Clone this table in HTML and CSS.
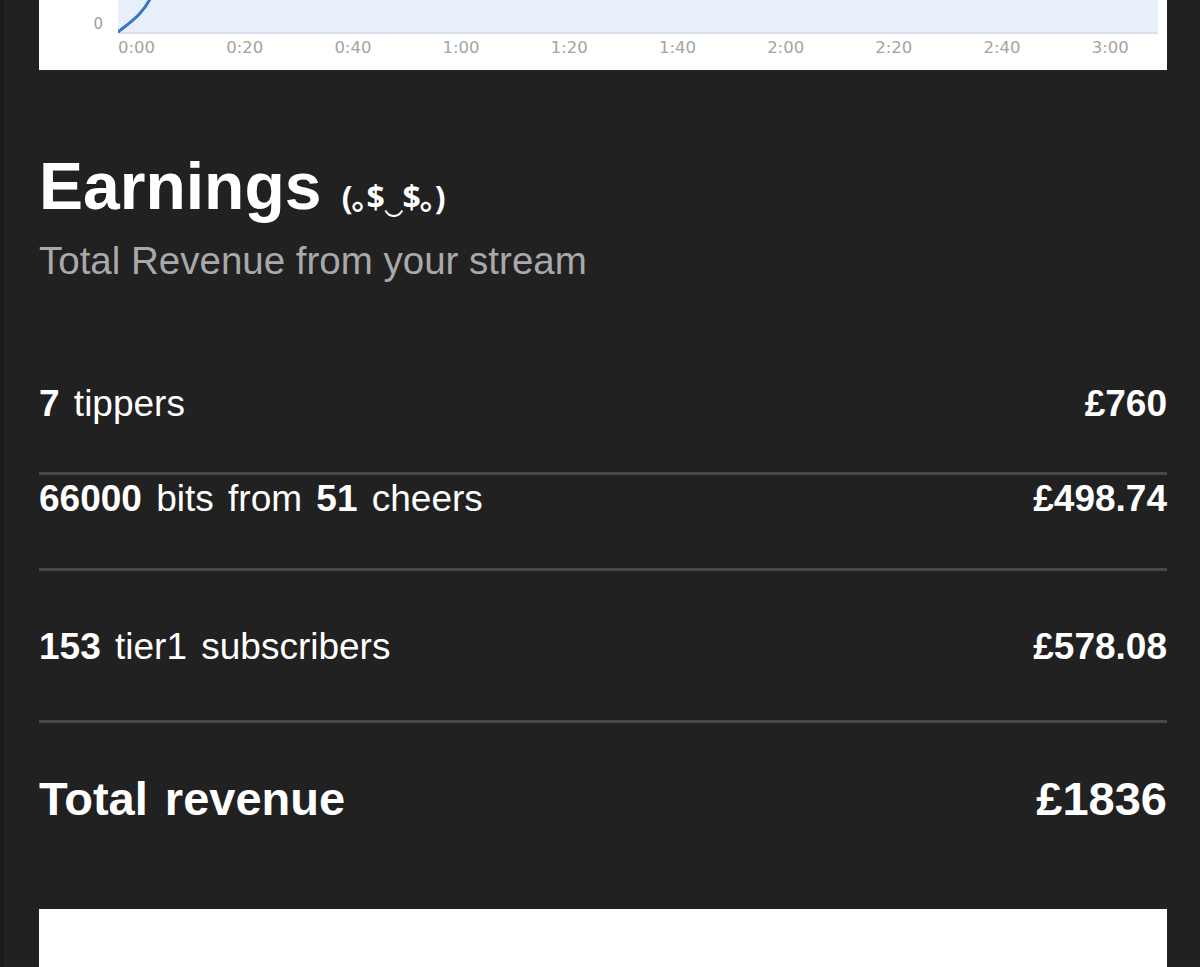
FILE: index.html
```html
<!DOCTYPE html>
<html lang="en">

<head>
    <meta charset="UTF-8">
    <meta name="viewport" content="width=device-width, initial-scale=1.0">
    <title>Stream Summary - Earnings</title>
    <link rel="stylesheet" href="styles.css">
</head>

<body>
    <div class="page">
        <div class="content">
            <!-- viewers chart (top part scrolled out of view) -->
            <div class="chart-card">
                <div class="chart-row">
                    <div class="y-label">0</div>
                    <div class="plot">
                        <svg class="plot-line" width="60" height="60" viewBox="0 0 60 60">
                            <path d="M0 59 C 14 48, 26 40, 34 22" fill="none" stroke="#3a72c6" stroke-width="3" stroke-linecap="round" />
                        </svg>
                    </div>
                </div>
                <div class="x-labels">
                    <span>0:00</span>
                    <span>0:20</span>
                    <span>0:40</span>
                    <span>1:00</span>
                    <span>1:20</span>
                    <span>1:40</span>
                    <span>2:00</span>
                    <span>2:20</span>
                    <span>2:40</span>
                    <span>3:00</span>
                </div>
            </div>

            <div class="earnings">
                <h1 class="earnings-title">Earnings <span class="kaomoji">(｡$‿$｡)</span></h1>
                <p class="earnings-sub">Total Revenue from your stream</p>

                <div class="earn-row first">
                    <div class="earn-label"><b>7</b> tippers</div>
                    <div class="earn-value">£760</div>
                </div>
                <div class="earn-row tight">
                    <div class="earn-label"><b>66000</b> bits from <b>51</b> cheers</div>
                    <div class="earn-value">£498.74</div>
                </div>
                <div class="earn-row subs">
                    <div class="earn-label"><b>153</b> tier1 subscribers</div>
                    <div class="earn-value">£578.08</div>
                </div>
                <div class="earn-row total">
                    <div class="earn-label">Total revenue</div>
                    <div class="earn-value">£1836</div>
                </div>
            </div>

            <div class="next-card"></div>
        </div>
    </div>
</body>

</html>
```

FILE: styles.css
```css
:root {
    --page-bg: #212121;
    --edge: #1a1a1a;
    --divider: #48484c;
    --white: #ffffff;
    --muted: #a9a9a9;
    --plot-fill: #e7effb;
}

* {
    box-sizing: border-box;
    margin: 0;
    padding: 0;
}

body {
    font-family: 'Liberation Sans', Arial, sans-serif;
    background-color: var(--page-bg);
    color: var(--white);
    overflow: hidden;
}

.page {
    min-height: 967px;
    border-left: 4px solid var(--edge);
}

.content {
    width: 1128px;
    margin-left: 35px;
}

/* chart */
.chart-card {
    background-color: var(--white);
    height: 70px;
    padding-bottom: 12px;
}

.chart-row {
    display: flex;
    align-items: flex-end;
    height: 34px;
}

.y-label {
    width: 79px;
    padding-right: 15px;
    text-align: right;
    font-family: 'DejaVu Sans', sans-serif;
    font-size: 15px;
    color: #9e9e9e;
    line-height: 1;
    margin-bottom: 2px;
}

.plot {
    position: relative;
    width: 1040px;
    height: 34px;
    background-color: var(--plot-fill);
    border-bottom: 2px solid #d6dfec;
}

.plot-line {
    position: absolute;
    left: 0;
    bottom: -1px;
}

.x-labels {
    display: flex;
    padding-left: 79px;
    margin-top: 4px;
}

.x-labels span {
    flex: 0 0 108.2px;
    font-family: 'DejaVu Sans', sans-serif;
    font-size: 16.5px;
    line-height: 20px;
    color: #a4a4a4;
}

/* earnings */
.earnings {
    padding-top: 80px;
}

.earnings-title {
    font-size: 66px;
    line-height: 72px;
    font-weight: bold;
}

.kaomoji {
    font-family: 'Noto Sans', 'Noto Sans CJK JP', sans-serif;
    font-size: 32px;
    margin-left: 2px;
    letter-spacing: -1px;
}

.earnings-sub {
    margin-top: 6px;
    font-size: 38.5px;
    line-height: 44px;
    color: var(--muted);
}

.earn-row {
    display: flex;
    justify-content: space-between;
    align-items: baseline;
    border-bottom: 3px solid var(--divider);
    font-size: 37px;
    line-height: 44px;
    word-spacing: 4px;
}

.earn-row.first {
    padding: 99px 0 46px;
}

.earn-row.tight {
    padding: 2px 0 47px;
}

.earn-row.subs {
    padding: 54px 0 51px;
}

.earn-value {
    font-weight: bold;
    word-spacing: 0;
}

.earn-row.total {
    border-bottom: none;
    padding: 49px 0 83px;
    font-size: 47px;
    line-height: 54px;
    font-weight: bold;
}

.next-card {
    background-color: var(--white);
    height: 80px;
}
```
